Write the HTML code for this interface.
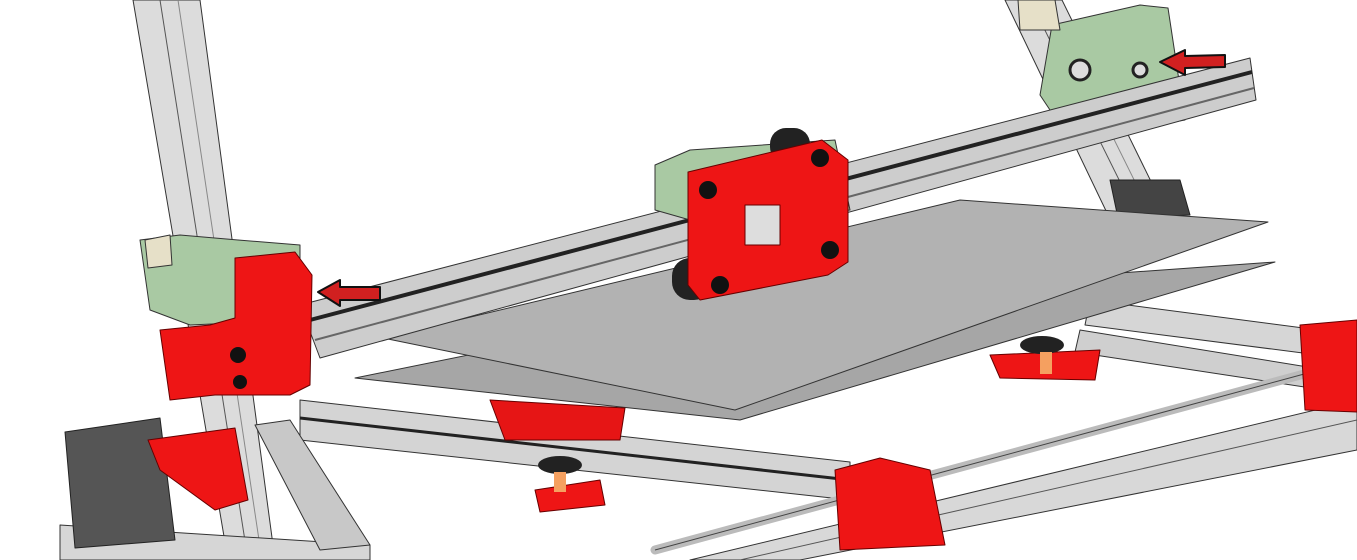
<!DOCTYPE html>
<html><head><meta charset="utf-8"><style>html,body{margin:0;padding:0;background:#fff;width:1357px;height:560px;overflow:hidden}</style></head>
<body>
<svg width="1357" height="560" viewBox="0 0 1357 560" xmlns="http://www.w3.org/2000/svg" stroke-linejoin="round">
<rect width="1357" height="560" fill="#fff"/>
<!-- bottom rails back -->
<polygon points="1090,300 1357,335 1357,360 1085,325" fill="#d6d6d6" stroke="#333"/>
<polygon points="1080,330 1357,375 1357,395 1075,352" fill="#cfcfcf" stroke="#333"/>
<!-- right vertical post -->
<polygon points="1005,0 1062,0 1165,210 1108,215" fill="#dcdcdc" stroke="#333"/>
<line x1="1030" y1="0" x2="1135" y2="212" stroke="#555"/>
<line x1="1045" y1="0" x2="1150" y2="212" stroke="#888"/>
<polygon points="1110,180 1180,180 1190,215 1118,218" fill="#444" stroke="#222"/>
<!-- green block right -->
<polygon points="1052,25 1140,5 1168,8 1185,120 1070,140 1040,95" fill="#a9c9a3" stroke="#333"/>
<polygon points="1018,0 1055,0 1060,30 1020,30" fill="#e6e0c8" stroke="#333"/>
<circle cx="1080" cy="70" r="10" fill="#ddd" stroke="#222" stroke-width="3"/>
<circle cx="1140" cy="70" r="7" fill="#ddd" stroke="#222" stroke-width="3"/>
<!-- left vertical post -->
<polygon points="133,0 200,0 275,560 228,560" fill="#dcdcdc" stroke="#333"/>
<line x1="160" y1="0" x2="248" y2="560" stroke="#555"/>
<line x1="178" y1="0" x2="262" y2="560" stroke="#888"/>
<!-- front left rail -->
<polygon points="300,400 850,462 850,500 300,440" fill="#d4d4d4" stroke="#333"/>
<line x1="300" y1="418" x2="850" y2="480" stroke="#222" stroke-width="3"/>
<polygon points="60,525 370,545 370,560 60,560" fill="#d6d6d6" stroke="#333"/>
<!-- bottom right big rail -->
<polygon points="690,560 1357,400 1357,450 800,560" fill="#d8d8d8" stroke="#333"/>
<line x1="740" y1="560" x2="1357" y2="420" stroke="#555"/>
<!-- plates -->
<polygon points="355,378 740,300 1275,262 740,420" fill="#a6a6a6" stroke="#333"/>
<polygon points="383,338 960,200 1268,222 735,410" fill="#b2b2b2" stroke="#333"/>
<!-- main x rail -->
<polygon points="300,305 1250,58 1256,100 320,358" fill="#cdcdcd" stroke="#333"/>
<line x1="310" y1="320" x2="1252" y2="72" stroke="#222" stroke-width="4"/>
<line x1="315" y1="340" x2="1254" y2="88" stroke="#666" stroke-width="2"/>
<!-- green carriage -->
<polygon points="655,165 690,150 835,140 850,210 690,220 655,210" fill="#a9c9a3" stroke="#333"/>
<rect x="672" y="258" width="40" height="42" rx="18" fill="#222"/>
<rect x="770" y="128" width="40" height="35" rx="16" fill="#222"/>
<!-- red carriage -->
<polygon points="688,172 822,140 848,160 848,262 828,275 700,300 688,285" fill="#ee1515" stroke="#600"/>
<circle cx="708" cy="190" r="9" fill="#111"/><circle cx="820" cy="158" r="9" fill="#111"/>
<circle cx="720" cy="285" r="9" fill="#111"/><circle cx="830" cy="250" r="9" fill="#111"/>
<rect x="745" y="205" width="35" height="40" fill="#ddd" stroke="#600"/>
<!-- left green/red block -->
<polygon points="140,240 180,235 238,240 300,245 300,320 190,325 150,310" fill="#a9c9a3" stroke="#333"/>
<polygon points="145,240 170,235 172,265 148,268" fill="#e6e0c8" stroke="#333"/>
<polygon points="235,258 295,252 312,275 310,385 290,395 240,395 215,395 170,400 160,330 210,325 235,318" fill="#ee1515" stroke="#600"/>
<circle cx="238" cy="355" r="8" fill="#111"/><circle cx="240" cy="382" r="7" fill="#111"/>
<!-- arrows -->
<polygon points="318,292 340,280 340,287 380,287 380,300 340,300 340,306" fill="#d12020" stroke="#111" stroke-width="2"/>
<polygon points="1160,62 1185,50 1185,56 1225,55 1225,67 1185,68 1185,75" fill="#d12020" stroke="#111" stroke-width="2"/>
<!-- rod -->
<line x1="655" y1="550" x2="1330" y2="367" stroke="#bbb" stroke-width="9" stroke-linecap="round"/>
<line x1="655" y1="550" x2="1330" y2="367" stroke="#444" stroke-width="1"/>
<!-- motor -->
<polygon points="65,432 160,418 175,540 75,548" fill="#555" stroke="#222"/>
<!-- red bottom parts -->
<polygon points="148,440 235,428 248,500 215,510 160,470" fill="#ee1515" stroke="#600"/>
<polygon points="490,400 625,408 620,440 505,440" fill="#e61515" stroke="#600"/>
<polygon points="835,470 880,458 930,470 945,545 840,550" fill="#ee1515" stroke="#600"/>
<polygon points="1300,325 1357,320 1357,412 1305,410" fill="#ee1515" stroke="#600"/>
<polygon points="990,355 1100,350 1095,380 1000,378" fill="#ee1515" stroke="#600"/>
<polygon points="535,490 600,480 605,505 540,512" fill="#ee1515" stroke="#600"/>
<ellipse cx="560" cy="465" rx="22" ry="9" fill="#222"/>
<ellipse cx="1042" cy="345" rx="22" ry="9" fill="#222"/>
<rect x="554" y="472" width="12" height="20" fill="#f5a060"/>
<rect x="1040" y="352" width="12" height="22" fill="#f5a060"/>
<!-- diagonal brace -->
<polygon points="255,425 290,420 370,545 320,550" fill="#c8c8c8" stroke="#333"/>
</svg>
</body></html>
